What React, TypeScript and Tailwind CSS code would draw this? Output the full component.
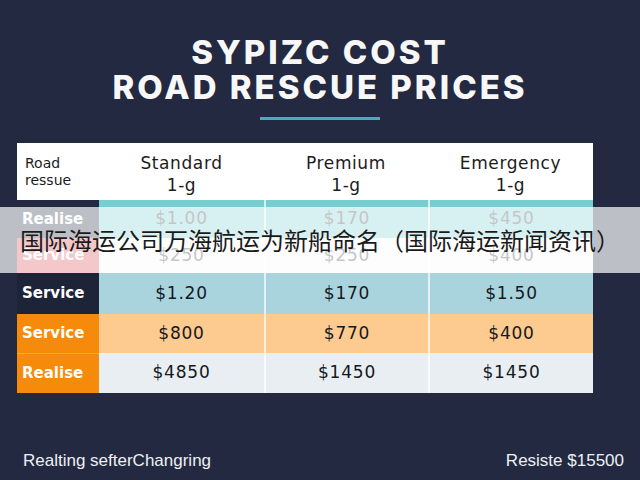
const rows = [
  { label: "Realise", labelBg: "bg-[#222940]", cellBg: "bg-[#78cdd0]", h: "h-[38px]", text: "text-[#3a3f44]", values: ["$1.00", "$170", "$450"] },
  { label: "Service", labelBg: "bg-[#d9434f]", cellBg: "bg-[#f7f9fb]", h: "h-[35px]", text: "text-[#3a3f44]", values: ["$250", "$250", "$400"] },
  { label: "Service", labelBg: "bg-[#1e2438]", cellBg: "bg-[#a9d4de]", h: "h-[41px]", text: "text-[#15181d]", values: ["$1.20", "$170", "$1.50"] },
  { label: "Service", labelBg: "bg-[#f68a0a]", cellBg: "bg-[#fdca8f]", h: "h-[39px]", text: "text-[#15181d]", values: ["$800", "$770", "$400"] },
  { label: "Realise", labelBg: "bg-[#f68a0a] border-t border-[#fca445]", cellBg: "bg-[#e9eef3]", h: "h-[40px]", text: "text-[#15181d]", values: ["$4850", "$1450", "$1450"] },
];

const headers = ["Standard", "Premium", "Emergency"];

export default function App() {
  return (
    <div className="relative flex h-[480px] w-[640px] flex-col overflow-hidden bg-[#222940] font-['DejaVu_Sans',sans-serif]">
      <div className="pt-[35px] text-center font-['Inter',sans-serif] text-[33px] leading-[35px] font-extrabold tracking-[3px] text-[#f7f7f7]">
        <div>SYPIZC COST</div>
        <div>ROAD RESCUE PRICES</div>
      </div>
      <div className="mx-auto mt-[12px] h-[3px] w-[120px] bg-[#3fb0c0]" />

      <div className="mt-[23px] ml-[17px] w-[576px]">
        <div className="grid h-[57px] grid-cols-[82px_165px_164px_165px] bg-white text-[#1c1c1c]">
          <div className="flex flex-col justify-center pl-[8px] text-[14px] leading-[17px]">
            <span>Road</span>
            <span>ressue</span>
          </div>
          {headers.map((h) => (
            <div key={h} className="flex flex-col items-center justify-center pt-[4px] text-[17px] leading-[22px] tracking-[0.6px]">
              <span>{h}</span>
              <span>1-g</span>
            </div>
          ))}
        </div>
        {rows.map((r, i) => (
          <div key={i} className={`grid grid-cols-[82px_165px_164px_165px] ${r.h}`}>
            <div className={`flex items-center pl-[5px] text-[15px] font-bold text-white ${r.labelBg}`}>{r.label}</div>
            {r.values.map((v, j) => (
              <div
                key={j}
                className={`flex items-center justify-center text-[17px] tracking-[0.8px] ${r.cellBg} ${r.text} ${j > 0 ? "border-l-2 border-white/70" : ""}`}
              >
                {v}
              </div>
            ))}
          </div>
        ))}
      </div>

      <div className="mt-auto flex items-center justify-between pr-[16px] pb-[9px] pl-[23px] font-['Liberation_Sans',sans-serif] text-[17px] leading-[20px] text-[#eef0f4]">
        <span>Realting sefterChangring</span>
        <span className="font-medium">Resiste $15500</span>
      </div>

      <div className="absolute top-[207px] left-0 flex h-[66px] w-[640px] items-center justify-center bg-white/70 font-['Noto_Sans_CJK_SC',sans-serif] text-[24px] text-[#1a1a1a]">
        国际海运公司万海航运为新船命名（国际海运新闻资讯）
      </div>
    </div>
  );
}
